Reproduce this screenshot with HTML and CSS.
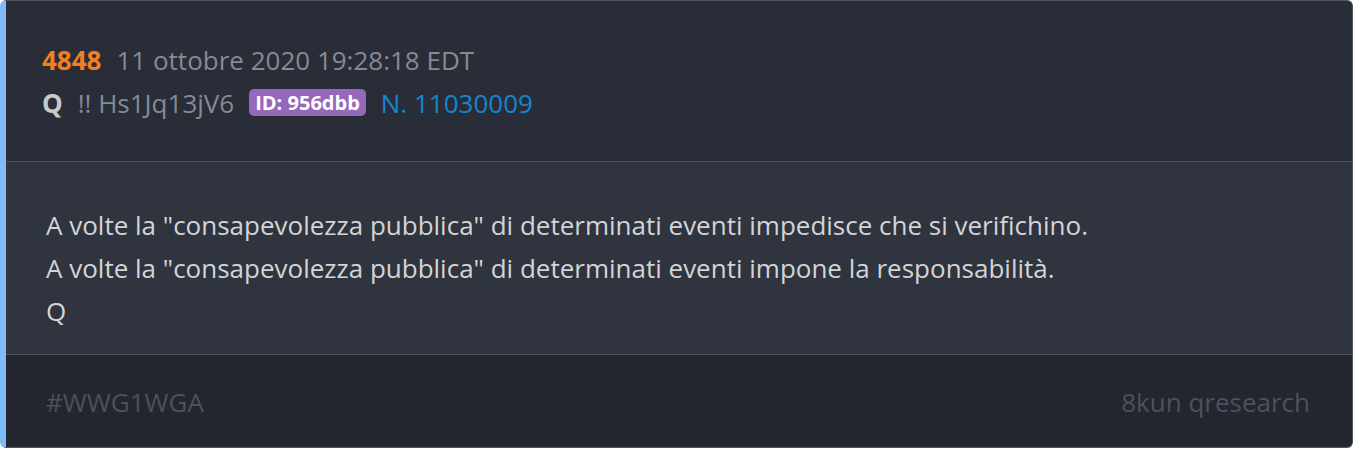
FILE: index.html
```html
<!DOCTYPE html>
<html lang="it">
<head>
<meta charset="utf-8">
<link rel="stylesheet" href="styles.css">
</head>
<body>
<article class="post">
  <header class="post-head">
    <div class="line">
      <span class="num">4848</span>
      <span class="date">11 ottobre 2020 19:28:18 EDT</span>
    </div>
    <div class="line">
      <span class="author">Q</span>
      <span class="trip">!! Hs1Jq13jV6</span>
      <span class="badge">ID: 956dbb</span>
      <span class="ref">N. 11030009</span>
    </div>
  </header>
  <div class="post-body">
    <p>A volte la "consapevolezza pubblica" di determinati eventi impedisce che si verifichino.</p>
    <p>A volte la "consapevolezza pubblica" di determinati eventi impone la responsabilità.</p>
    <p>Q</p>
  </div>
  <footer class="post-foot">
    <span>#WWG1WGA</span>
    <span>8kun qresearch</span>
  </footer>
</article>
</body>
</html>
```
FILE: styles.css
```css
html, body {
  margin: 0;
  padding: 0;
  background: #ffffff;
}
body {
  font-family: "Open Sans", "Liberation Sans", sans-serif;
}
.post {
  width: 1353px;
  height: 448px;
  box-sizing: border-box;
  display: flex;
  flex-direction: column;
  border: 1px solid #50555f;
  border-left: 6px solid #7fbbf9;
  border-radius: 6px;
  overflow: hidden;
  background: #2f343e;
}
.post-head {
  flex: 0 0 auto;
  background: #292d37;
  padding: 37px 36px 0;
  height: 161px;
  box-sizing: border-box;
  border-bottom: 1px solid #4d525c;
}
.line {
  display: flex;
  align-items: center;
  height: 43px;
  font-size: 26px;
  color: #858a95;
}
.num {
  color: #f57f20;
  font-weight: 700;
  margin-right: 15px;
}
.author {
  color: #c8c9cc;
  font-weight: 700;
  margin-right: 15px;
}
.trip {
  margin-right: 15px;
}
.badge {
  background: #9568ba;
  color: #ffffff;
  font-weight: 700;
  font-size: 20px;
  line-height: 27px;
  padding: 0 6px;
  border-radius: 5px;
  margin-right: 15px;
}
.ref {
  color: #1486cf;
}
.post-body {
  flex: 1 1 auto;
  padding: 42px 40px 0;
  box-sizing: border-box;
  border-bottom: 1px solid #4d525c;
}
.post-body p {
  margin: 0;
  font-size: 26px;
  line-height: 43px;
  color: #d3d4d6;
}
.post-foot {
  flex: 0 0 auto;
  background: #23262e;
  height: 92px;
  box-sizing: border-box;
  display: flex;
  justify-content: space-between;
  align-items: center;
  padding: 2px 42px 0 40px;
  font-size: 26px;
  color: #4c515d;
}
```
